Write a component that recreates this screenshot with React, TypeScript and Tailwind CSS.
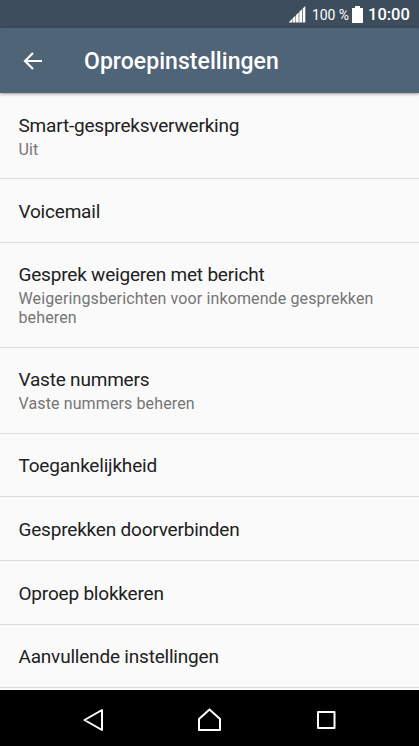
const items: { title: string; sub?: string; h: string }[] = [
  { title: "Smart-gespreksverwerking", sub: "Uit", h: "h-[86px] pt-px" },
  { title: "Voicemail", h: "h-[64px] pt-[3px]" },
  { title: "Gesprek weigeren met bericht", sub: "Weigeringsberichten voor inkomende gesprekken beheren", h: "h-[105px]" },
  { title: "Vaste nummers", sub: "Vaste nummers beheren", h: "h-[86px]" },
  { title: "Toegankelijkheid", h: "h-[63px] pt-px" },
  { title: "Gesprekken doorverbinden", h: "h-[64px] pt-[3px]" },
  { title: "Oproep blokkeren", h: "h-[64px] pt-[2px]" },
  { title: "Aanvullende instellingen", h: "h-[63px] pt-[2px]" },
];

export default function App() {
  return (
    <div className="flex h-[746px] w-[419px] flex-col overflow-hidden bg-[#fafafa] font-['Roboto',sans-serif]">
      <div className="flex h-7 shrink-0 items-center justify-end bg-[#3e4d5b] pr-[10px] text-white">
        <svg className="mt-px h-[17px] w-[17px]" viewBox="0 0 17 17" fill="#fff">
          <path d="M0 16.500V16L3 13V16.500ZM3.500 16.500V12.500L6.500 9.500V16.500ZM7 16.500V9L9.700 6.500V16.500ZM10.300 16.500V5.800L13 3.200V16.500ZM13.700 16.500V2.500L16.300 0V16.500Z" />
        </svg>
        <span className="ml-[6px] w-[37px] whitespace-nowrap pt-[2px] text-[14px] tracking-[-0.1px]">100 %</span>
        <svg className="ml-[3px] h-[17px] w-[11px]" viewBox="0 0 11 17" fill="#fff">
          <path d="M3 0H8V2H11V17H0V2H3Z" />
        </svg>
        <span className="ml-[5px] w-[41px] whitespace-nowrap pt-[2px] text-[16.500px] font-medium">10:00</span>
      </div>
      <header className="z-10 flex h-[65px] shrink-0 items-center bg-[#506477] pl-[23px] text-white shadow-[0_1px_3px_rgba(0,0,0,0.4)]">
        <svg className="h-[18px] w-[19px]" viewBox="0 0 19 18" fill="none" stroke="#fff" strokeWidth="2.200">
          <path d="M19 9H2M10 1L2 9L10 17" />
        </svg>
        <h1 className="ml-[42px] pt-[3px] text-[23px] font-medium tracking-[0.05px]">Oproepinstellingen</h1>
      </header>
      <main className="h-[597px] shrink-0 overflow-hidden">
        {items.map((it) => (
          <div key={it.title} className={`${it.h} flex flex-col justify-center border-b border-[#dcdcdc] pr-[19px] pl-[18.500px]`}>
            <div className="text-[19px] leading-[24px] tracking-[-0.2px] text-[#212121]">{it.title}</div>
            {it.sub && <div className="pt-[2px] text-[16px] leading-[19px] tracking-[0.12px] text-[#757575]">{it.sub}</div>}
          </div>
        ))}
      </main>
      <nav className="flex h-14 shrink-0 items-center bg-black">
        <svg className="h-14 w-full" viewBox="0 0 419 56" fill="none" stroke="#fff" strokeWidth="2" strokeLinejoin="round">
          <path d="M102 20V40L84.500 30ZM209.500 19.500L220 29V40H199V29ZM318 22H334.500V38H318Z" />
        </svg>
      </nav>
    </div>
  );
}
